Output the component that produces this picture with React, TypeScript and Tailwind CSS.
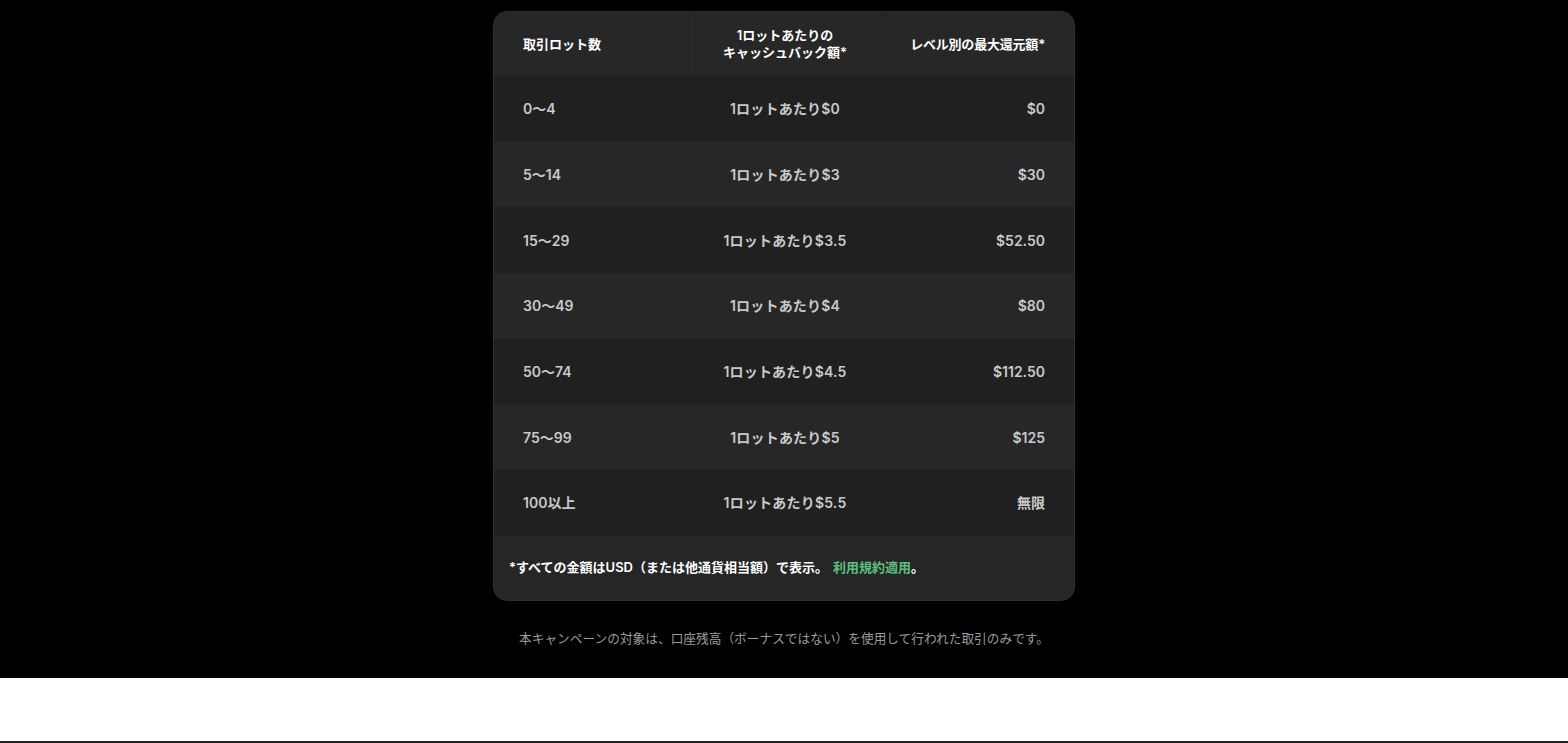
const rows = [
  { lots: "0〜4", per: "1ロットあたり$0", max: "$0" },
  { lots: "5〜14", per: "1ロットあたり$3", max: "$30" },
  { lots: "15〜29", per: "1ロットあたり$3.5", max: "$52.50" },
  { lots: "30〜49", per: "1ロットあたり$4", max: "$80" },
  { lots: "50〜74", per: "1ロットあたり$4.5", max: "$112.50" },
  { lots: "75〜99", per: "1ロットあたり$5", max: "$125" },
  { lots: "100以上", per: "1ロットあたり$5.5", max: "無限" },
];

const App = () => {
  return (
    <div className="bg-white min-h-[743px] font-['Inter','Noto_Sans_CJK_JP',sans-serif]">
      <div className="bg-black h-[678px] flex flex-col items-center pt-[11px]">
        {/* Table card */}
        <div className="w-[582px] rounded-[14px] overflow-hidden border border-[#2f2f2f] bg-[#262626]">
          <table className="w-full border-collapse table-fixed">
            <thead>
              <tr className="bg-[#272727] h-[64px] text-[13px] font-semibold text-white leading-[17px]">
                <th className="w-[194px] pl-[29px] text-left font-semibold border-r border-[#222]">取引ロット数</th>
                <th className="w-[194px] text-center font-semibold border-r border-[#222]">
                  1ロットあたりの
                  <br />
                  キャッシュバック額*
                </th>
                <th className="pr-[29px] text-right font-semibold tracking-[-0.2px]">レベル別の最大還元額*</th>
              </tr>
            </thead>
            <tbody>
              {rows.map((r, i) => (
                <tr
                  key={r.lots}
                  className={`h-[65.7px] text-[14px] font-semibold text-[#c9c9c9] ${i % 2 === 0 ? "bg-[#202020]" : "bg-[#272727]"}`}
                >
                  <td className={`pl-[29px] border-r ${i % 2 === 0 ? "border-[#1c1c1c]" : "border-[#232323]"}`}>{r.lots}</td>
                  <td className={`text-center tracking-[0.2px] border-r ${i % 2 === 0 ? "border-[#1c1c1c]" : "border-[#232323]"}`}>{r.per}</td>
                  <td className="pr-[29px] text-right">{r.max}</td>
                </tr>
              ))}
            </tbody>
          </table>
          {/* Footer note */}
          <div className="h-[64px] flex items-center pl-[15px] text-[13px] font-semibold text-white">
            *すべての金額はUSD（または他通貨相当額）で表示。
            <span className="ml-[5px] text-[#5cbf7f]">利用規約適用</span>
            <span>。</span>
          </div>
        </div>

        <p className="mt-[28px] text-[12.7px] text-[#9b9b9b]">
          本キャンペーンの対象は、口座残高（ボーナスではない）を使用して行われた取引のみです。
        </p>
      </div>
      <div className="h-[63px]" />
      <div className="h-[2px] bg-[#222]" />
    </div>
  );
};

export default App;
